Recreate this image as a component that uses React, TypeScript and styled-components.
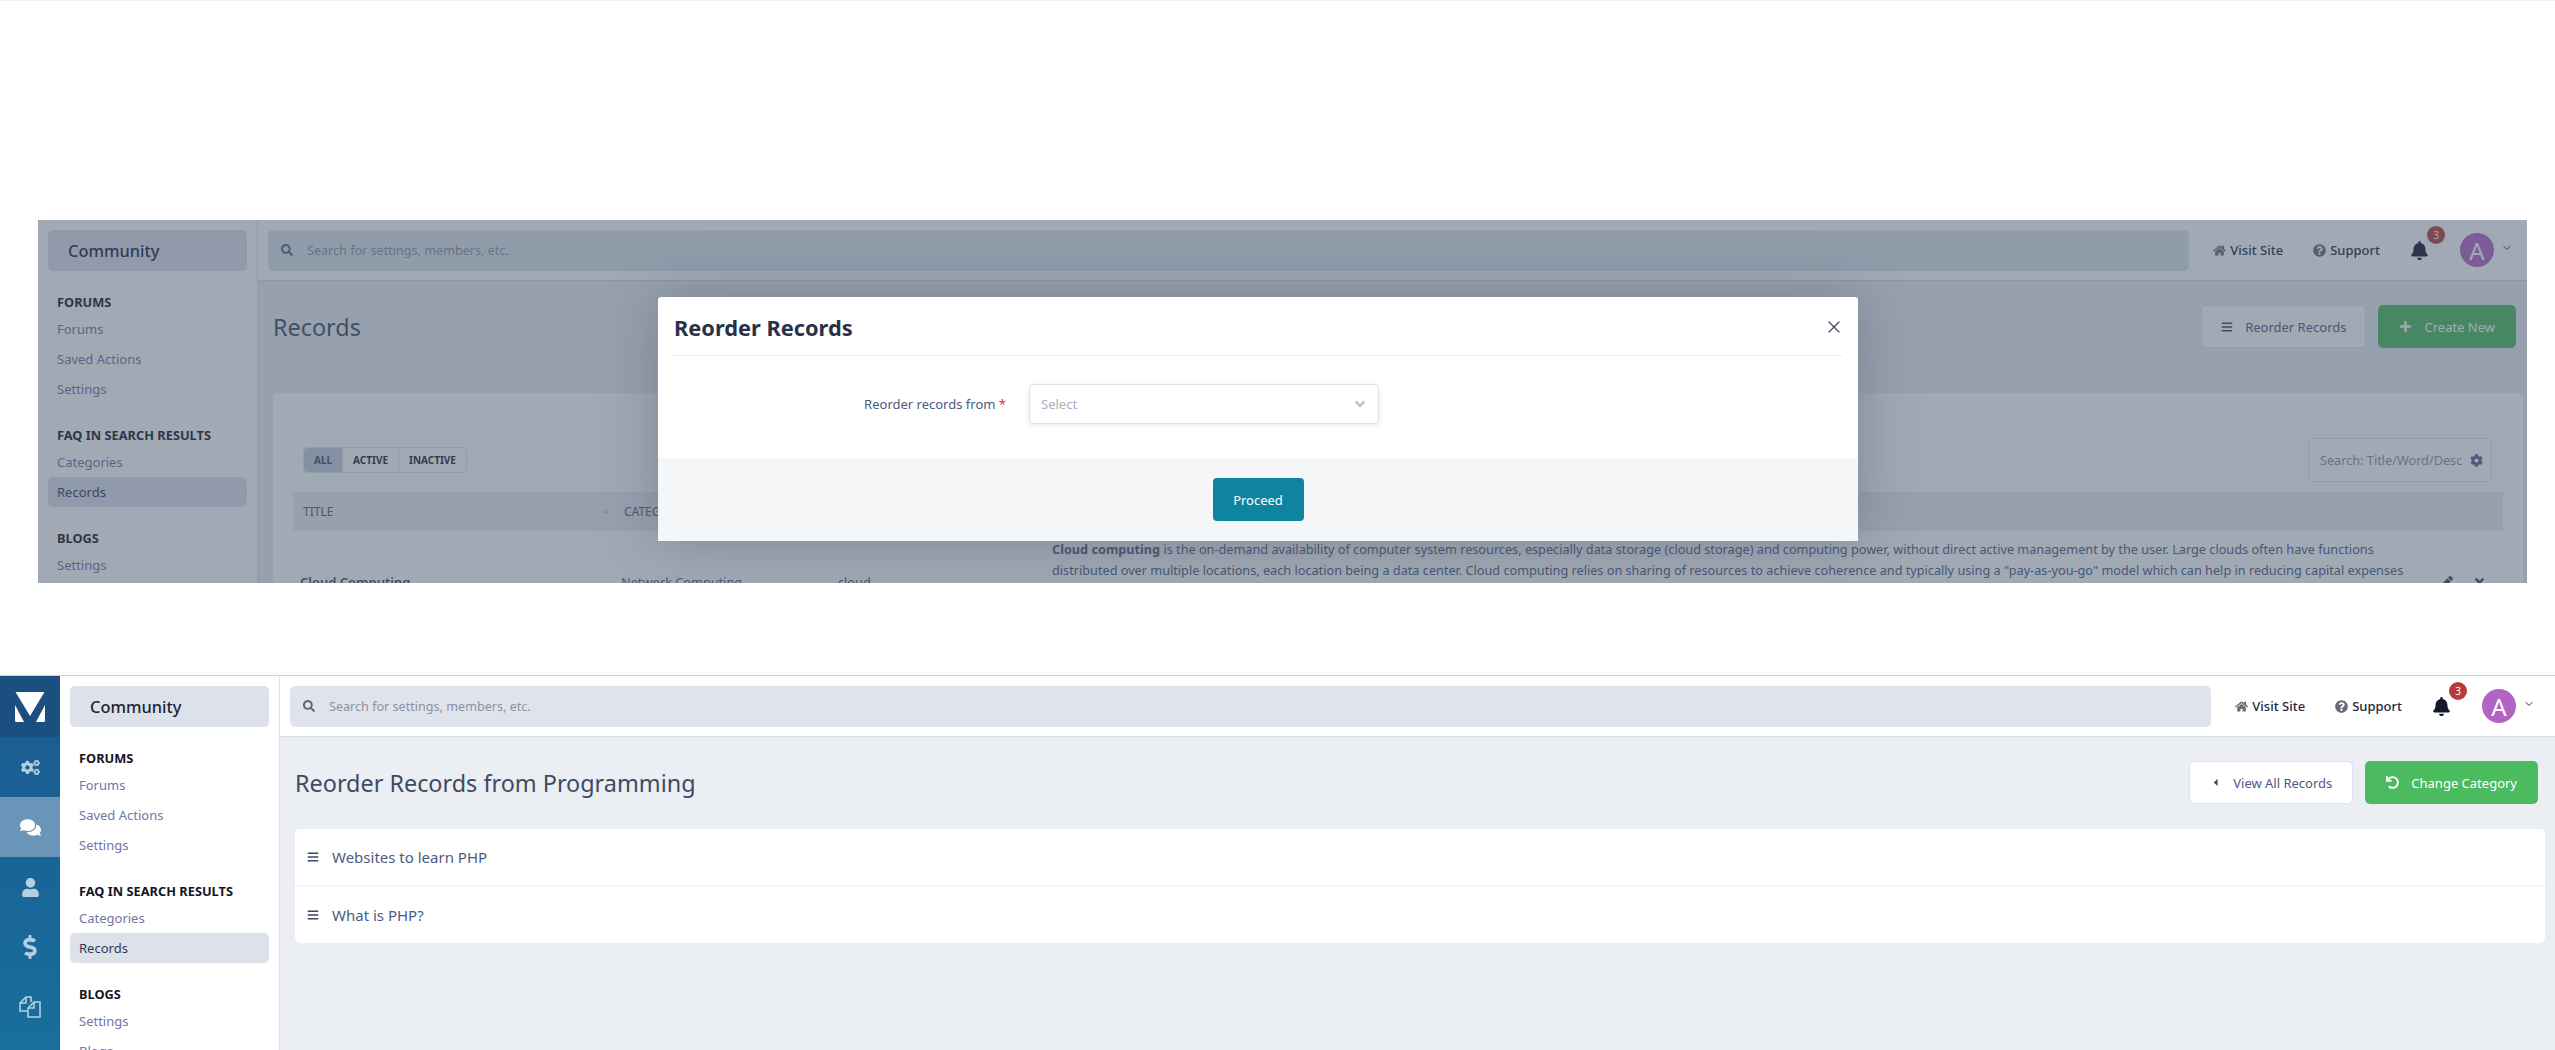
import React from "react";
import styled, { createGlobalStyle } from "styled-components";
import {
  FaAngleDown,
  FaBars,
  FaBell,
  FaCaretLeft,
  FaCaretUp,
  FaCog,
  FaCogs,
  FaComments,
  FaDollarSign,
  FaHome,
  FaPen,
  FaPlus,
  FaQuestionCircle,
  FaSearch,
  FaTimes,
  FaUndo,
  FaUser,
} from "react-icons/fa";
import { LuChevronDown, LuX } from "react-icons/lu";

const GlobalStyle = createGlobalStyle`
  html, body {
    margin: 0;
    padding: 0;
    background: #fff;
  }
  body {
    font-family: "Noto Sans", "Open Sans", sans-serif;
    color: #3f4a63;
  }
  * {
    box-sizing: border-box;
  }
`;

const sections = [
  { title: "FORUMS", links: ["Forums", "Saved Actions", "Settings"] },
  { title: "FAQ IN SEARCH RESULTS", links: ["Categories", "Records"] },
  { title: "BLOGS", links: ["Settings", "Blogs"] },
];

function SideNav() {
  return (
    <Sidebar>
      <Brand>Community</Brand>
      {sections.map((section) => (
        <Section key={section.title}>
          <SectionTitle>{section.title}</SectionTitle>
          {section.links.map((link) => (
            <NavLink key={link} $active={link === "Records"}>
              {link}
            </NavLink>
          ))}
        </Section>
      ))}
    </Sidebar>
  );
}

function TopBar({ inset }: { inset: number }) {
  return (
    <Bar $inset={inset}>
      <SearchField>
        <FaSearch />
        <span>Search for settings, members, etc.</span>
      </SearchField>
      <BarLink>
        <FaHome />
        Visit Site
      </BarLink>
      <BarLink>
        <FaQuestionCircle />
        Support
      </BarLink>
      <BellWrap>
        <FaBell />
        <Badge>3</Badge>
      </BellWrap>
      <Avatar>A</Avatar>
      <AvatarCaret>
        <LuChevronDown />
      </AvatarCaret>
    </Bar>
  );
}

function ReorderModal() {
  return (
    <Overlay>
      <Modal>
        <ModalHead>
          <ModalTitle>Reorder Records</ModalTitle>
          <CloseIcon>
            <LuX />
          </CloseIcon>
        </ModalHead>
        <ModalBody>
          <FieldLabel>
            Reorder records from <Required>*</Required>
          </FieldLabel>
          <SelectBox>
            Select
            <FaAngleDown />
          </SelectBox>
        </ModalBody>
        <ModalFoot>
          <ProceedButton>Proceed</ProceedButton>
        </ModalFoot>
      </Modal>
    </Overlay>
  );
}

export default function App() {
  return (
    <Page>
      <GlobalStyle />
      <TopRule />
      <DimmedShot>
        <SideNav />
        <Main>
          <TopBar inset={14} />
          <Content $inset={4}>
            <HeaderRow $inset={7}>
              <PageTitle>Records</PageTitle>
              <Actions>
                <LightButton>
                  <FaBars />
                  Reorder Records
                </LightButton>
                <GreenButton>
                  <FaPlus />
                  Create New
                </GreenButton>
              </Actions>
            </HeaderRow>
            <RecordsCard>
              <Toolbar>
                <Tabs>
                  <Tab $active>ALL</Tab>
                  <Tab>ACTIVE</Tab>
                  <Tab>INACTIVE</Tab>
                </Tabs>
                <TableSearch>
                  <span>Search: Title/Word/Descr</span>
                  <FaCog />
                </TableSearch>
              </Toolbar>
              <TableHead>
                <HeadCell>
                  TITLE
                  <FaCaretUp />
                </HeadCell>
                <HeadCell>CATEGORY</HeadCell>
              </TableHead>
              <TableRow>
                <RecordName>Cloud Computing</RecordName>
                <span>Network Computing</span>
                <span>cloud</span>
                <Description>
                  <b>Cloud computing</b> is the on-demand availability of computer system resources,
                  especially data storage (cloud storage) and computing power, without direct active
                  management by the user. Large clouds often have functions distributed over multiple
                  locations, each location being a data center. Cloud computing relies on sharing of
                  resources to achieve coherence and typically using a "pay-as-you-go" model which can
                  help in reducing capital expenses but may also lead to unexpected operating expenses
                  for unaware users.
                </Description>
                <RowIcons>
                  <FaPen />
                  <FaTimes />
                </RowIcons>
              </TableRow>
            </RecordsCard>
          </Content>
        </Main>
        <ReorderModal />
      </DimmedShot>

      <FullShot>
        <Rail>
          <LogoCell>
            <svg width="30" height="30" viewBox="0 0 30 30" fill="#fff">
              <path d="M0.5 0H29.5L15 24Z" />
              <path d="M0 13L9 30H1.5Q0 30 0 28.5Z" />
              <path d="M30 13L21 30H28.5Q30 30 30 28.5Z" />
            </svg>
          </LogoCell>
          <RailItem $size={19}>
            <FaCogs />
          </RailItem>
          <RailItem $size={21} $active>
            <FaComments />
          </RailItem>
          <RailItem $size={19}>
            <FaUser />
          </RailItem>
          <RailItem $size={24}>
            <FaDollarSign />
          </RailItem>
          <RailItem $size={24}>
            <svg
              width="24"
              height="24"
              viewBox="0 0 24 24"
              fill="none"
              stroke="currentColor"
              strokeWidth="1.6"
            >
              <path d="M13 7V2H8L2 8V16H9" />
              <path d="M8 2V8H2" />
              <path d="M16 7L10 13V22H22V7Z" />
              <path d="M16 7V13H10" />
            </svg>
          </RailItem>
        </Rail>
        <SideNav />
        <Main>
          <TopBar inset={20} />
          <Content $inset={10}>
            <HeaderRow $inset={7}>
              <PageTitle>Reorder Records from Programming</PageTitle>
              <Actions>
                <LightButton $small>
                  <FaCaretLeft />
                  View All Records
                </LightButton>
                <GreenButton>
                  <FaUndo />
                  Change Category
                </GreenButton>
              </Actions>
            </HeaderRow>
            <SortCard>
              <SortRow>
                <FaBars />
                Websites to learn PHP
              </SortRow>
              <SortRow>
                <FaBars />
                What is PHP?
              </SortRow>
            </SortCard>
          </Content>
        </Main>
      </FullShot>
    </Page>
  );
}

const Page = styled.div`
  display: flex;
  flex-direction: column;
  height: 1050px;
  overflow: hidden;
`;

const TopRule = styled.div`
  height: 1px;
  flex: none;
  background: #f1f1f1;
`;

const DimmedShot = styled.section`
  position: relative;
  display: flex;
  flex: none;
  width: 2489px;
  height: 363px;
  margin: 219px 0 0 38px;
  overflow: hidden;
  background: #ebeef3;
`;

const FullShot = styled.section`
  display: flex;
  flex: none;
  height: 375px;
  margin-top: 92px;
  border-top: 1px solid #d6d6d6;
  box-shadow: 0 -3px 0 #f9f9f9;
  overflow: hidden;
  background: #ebeef3;
`;

const Rail = styled.nav`
  flex: none;
  width: 60px;
  background: linear-gradient(180deg, #1b5a92 0%, #186e9c 100%);
`;

const LogoCell = styled.div`
  display: flex;
  align-items: center;
  justify-content: center;
  height: 61px;
  background: #1b4f80;
`;

const RailItem = styled.div<{ $active?: boolean; $size: number }>`
  display: flex;
  align-items: center;
  justify-content: center;
  height: 60px;
  font-size: ${(p) => p.$size}px;
  color: ${(p) => (p.$active ? "#fff" : "#b5cfe2")};
  background: ${(p) => (p.$active ? "#6a94b8" : "transparent")};
`;

const Sidebar = styled.aside`
  flex: none;
  width: 220px;
  padding: 10px;
  background: #fff;
  border-right: 1px solid #dfe2e8;
`;

const Brand = styled.div`
  display: flex;
  align-items: center;
  height: 41px;
  padding: 0 20px;
  border-radius: 5px;
  background: #dce1ea;
  color: #1f2433;
  font-size: 16.4px;
  font-weight: 500;
`;

const Section = styled.div`
  margin-top: 21px;
`;

const SectionTitle = styled.div`
  display: flex;
  align-items: center;
  height: 20px;
  margin-bottom: 2px;
  padding-left: 9px;
  color: #14161f;
  font-size: 12.8px;
  font-weight: 700;
`;

const NavLink = styled.div<{ $active?: boolean }>`
  display: flex;
  align-items: center;
  height: 30px;
  padding-left: 9px;
  border-radius: 5px;
  font-size: 13px;
  color: ${(p) => (p.$active ? "#343a52" : "#6f76a6")};
  background: ${(p) => (p.$active ? "#dce1ea" : "transparent")};
`;

const Main = styled.div`
  flex: 1;
  min-width: 0;
  display: flex;
  flex-direction: column;
`;

const Bar = styled.header<{ $inset: number }>`
  display: flex;
  align-items: center;
  flex: none;
  height: 61px;
  padding: 0 ${(p) => p.$inset}px 0 10px;
  background: #fff;
  border-bottom: 1px solid #d8dbe1;
`;

const SearchField = styled.div`
  flex: 1;
  display: flex;
  align-items: center;
  gap: 14px;
  height: 41px;
  margin-right: 24px;
  padding: 0 13px;
  border-radius: 5px;
  background: #dfe4ec;
  color: #8b92a0;
  font-size: 12.6px;

  svg {
    font-size: 12px;
    color: #5d6475;
  }
`;

const BarLink = styled.div`
  display: flex;
  align-items: center;
  gap: 4px;
  margin-right: 30px;
  color: #22283a;
  font-size: 13px;
  font-weight: 500;
  white-space: nowrap;

  svg {
    font-size: 13px;
    color: #666c78;
  }
`;

const BellWrap = styled.div`
  position: relative;
  display: flex;
  width: 19px;
  margin-right: 31px;
  font-size: 19px;
  color: #14182a;
`;

const Badge = styled.span`
  position: absolute;
  top: -15px;
  left: 17px;
  display: flex;
  align-items: center;
  justify-content: center;
  width: 18px;
  height: 18px;
  border-radius: 50%;
  background: #b83a3a;
  color: #fff;
  font-size: 10px;
`;

const Avatar = styled.div`
  display: flex;
  align-items: center;
  justify-content: center;
  width: 34px;
  height: 34px;
  border-radius: 50%;
  background: #b264c4;
  color: #fff;
  font-size: 24px;
`;

const AvatarCaret = styled.div`
  display: flex;
  margin: -4px 0 0 7px;
  font-size: 12px;
  color: #2c3140;
`;

const Content = styled.main<{ $inset: number }>`
  flex: 1;
  padding: 24px ${(p) => p.$inset}px 0 15px;
`;

const HeaderRow = styled.div<{ $inset: number }>`
  display: flex;
  align-items: center;
  justify-content: space-between;
  height: 43px;
  padding-right: ${(p) => p.$inset}px;
`;

const PageTitle = styled.h1`
  margin: 0;
  color: #3f4a63;
  font-size: 23.4px;
  font-weight: 400;
  white-space: nowrap;
`;

const Actions = styled.div`
  display: flex;
  gap: 12px;
`;

const LightButton = styled.button<{ $small?: boolean }>`
  display: flex;
  align-items: center;
  gap: 12px;
  height: 43px;
  padding: 0 ${(p) => (p.$small ? "20px" : "19px")};
  border: 1px solid #dfe2e8;
  border-radius: 5px;
  background: #fff;
  color: #4d5a80;
  font-family: inherit;
  font-size: 13px;

  svg {
    font-size: ${(p) => (p.$small ? "11px" : "12px")};
    color: #3d4668;
  }
`;

const GreenButton = styled.button`
  display: flex;
  align-items: center;
  gap: 12px;
  height: 43px;
  padding: 0 21px;
  border: 0;
  border-radius: 5px;
  background: #4cbb5f;
  color: #fff;
  font-family: inherit;
  font-size: 13px;

  svg {
    font-size: 13px;
  }
`;

const RecordsCard = styled.div`
  height: 200px;
  margin-top: 45px;
  padding: 45px 20px 0;
  border-radius: 5px;
  background: #fff;
`;

const Toolbar = styled.div`
  display: flex;
  align-items: center;
  justify-content: space-between;
  height: 44px;
  padding: 0 11px 0 10px;
`;

const Tabs = styled.div`
  display: flex;
  height: 26px;
  border: 1px solid #dfe2e8;
  border-radius: 5px;
  overflow: hidden;
`;

const Tab = styled.div<{ $active?: boolean }>`
  display: flex;
  align-items: center;
  padding: 0 10px;
  border-right: 1px solid #dfe2e8;
  background: ${(p) => (p.$active ? "#c5cedb" : "#fff")};
  color: ${(p) => (p.$active ? "#3f4a63" : "#1f2433")};
  font-size: 10px;
  font-weight: 700;

  &:last-child {
    border-right: 0;
  }
`;

const TableSearch = styled.div`
  display: flex;
  align-items: center;
  justify-content: space-between;
  width: 184px;
  height: 44px;
  padding: 0 8px 0 11px;
  border: 1px solid #dfe2e8;
  border-radius: 5px;
  color: #8b92a8;
  font-size: 12.7px;
  white-space: nowrap;

  span {
    width: 142px;
    overflow: hidden;
  }

  svg {
    font-size: 13px;
    color: #56608a;
  }
`;

const TableHead = styled.div`
  display: grid;
  grid-template-columns: 321px 1fr;
  align-items: center;
  height: 39px;
  margin-top: 10px;
  padding-left: 10px;
  background: #ebeef3;
`;

const HeadCell = styled.div`
  display: flex;
  align-items: center;
  justify-content: space-between;
  padding-right: 14px;
  color: #4d5a80;
  font-size: 12px;

  svg {
    font-size: 9px;
    color: #bfc6d2;
  }
`;

const TableRow = styled.div`
  display: grid;
  grid-template-columns: 321px 217px 214px 1370px 1fr;
  align-items: center;
  min-height: 102px;
  padding: 8px 0 8px 7px;
  color: #4d5a80;
  font-size: 12.7px;
`;

const RecordName = styled.span`
  color: #3f4a63;
  font-size: 13px;
  font-weight: 600;
`;

const Description = styled.div`
  align-self: start;
  line-height: 21px;

  b {
    font-weight: 700;
  }
`;

const RowIcons = styled.div`
  display: flex;
  gap: 20px;
  padding-left: 18px;
  font-size: 13px;
  color: #3f4a63;
`;

const Overlay = styled.div`
  position: absolute;
  inset: 0;
  padding: 77px 0 0 620px;
  background: rgba(68, 84, 106, 0.5);
`;

const Modal = styled.div`
  width: 1200px;
  height: 244px;
  border-radius: 3px 3px 0 0;
  background: #fff;
  box-shadow: 0 0 60px rgba(60, 70, 90, 0.35);
`;

const ModalHead = styled.div`
  display: flex;
  align-items: center;
  justify-content: space-between;
  height: 59px;
  margin: 0 15px;
  padding: 2px 0 0 1px;
  border-bottom: 1px solid #edeff3;
`;

const ModalTitle = styled.h2`
  margin: 0;
  color: #2a3147;
  font-size: 21.8px;
  font-weight: 700;
`;

const CloseIcon = styled.span`
  display: flex;
  margin-right: -1px;
  font-size: 20px;
  color: #3f4a63;

  svg {
    stroke-width: 1.5;
  }
`;

const ModalBody = styled.div`
  display: flex;
  align-items: flex-start;
  gap: 23px;
  height: 102px;
  padding-top: 28px;
`;

const FieldLabel = styled.label`
  width: 348px;
  line-height: 40px;
  text-align: right;
  color: #4d5a80;
  font-size: 13px;
`;

const Required = styled.span`
  color: #d33;
`;

const SelectBox = styled.div`
  display: flex;
  align-items: center;
  justify-content: space-between;
  width: 350px;
  height: 40px;
  padding: 0 10px 0 11px;
  border: 1px solid #dfe1ee;
  border-radius: 4px;
  box-shadow: 0 1px 4px rgba(90, 100, 140, 0.15);
  color: #a7aec2;
  font-size: 13px;

  svg {
    font-size: 16px;
    color: #bcc3d2;
  }
`;

const ModalFoot = styled.div`
  display: flex;
  justify-content: center;
  height: 83px;
  padding-top: 20px;
  background: #f5f6f8;
`;

const ProceedButton = styled.button`
  width: 91px;
  height: 43px;
  border: 0;
  border-radius: 4px;
  background: #0e84a1;
  color: #fff;
  font-family: inherit;
  font-size: 13px;
`;

const SortCard = styled.div`
  margin-top: 25px;
  border-radius: 5px;
  background: #fff;
`;

const SortRow = styled.div`
  display: flex;
  align-items: center;
  gap: 13px;
  height: 57px;
  padding-left: 12px;
  color: #4d5a80;
  font-size: 15px;
  border-bottom: 1px solid #eef0f5;

  &:last-child {
    border-bottom: 0;
  }

  svg {
    font-size: 12px;
    color: #3d4668;
  }
`;
